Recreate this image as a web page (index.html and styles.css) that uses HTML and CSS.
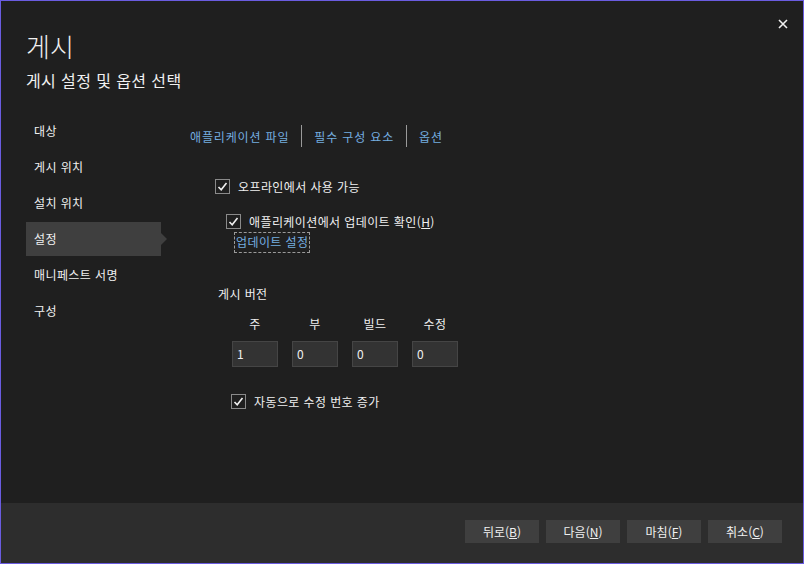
FILE: index.html
```html
<!DOCTYPE html>
<html lang="ko">
<head>
  <meta charset="UTF-8">
  <title>게시</title>
  <link rel="stylesheet" href="styles.css">
</head>
<body>

<div class="dialog">
  <div class="close-btn">
    <svg width="10" height="10" viewBox="0 0 10 10"><path d="M1 1 L9 9 M9 1 L1 9" stroke="#f0f0f0" stroke-width="1.6"/></svg>
  </div>

  <div class="main">
    <h1 class="title">게시</h1>
    <div class="subtitle">게시 설정 및 옵션 선택</div>

    <div class="body">
      <ul class="nav">
        <li>대상</li>
        <li>게시 위치</li>
        <li>설치 위치</li>
        <li class="active">설정</li>
        <li>매니페스트 서명</li>
        <li>구성</li>
      </ul>

      <div class="content">
        <div class="tabs">
          <span class="tab">애플리케이션 파일</span>
          <span class="sep"></span>
          <span class="tab">필수 구성 요소</span>
          <span class="sep"></span>
          <span class="tab">옵션</span>
        </div>

        <label class="check check-offline">
          <span class="box"><svg width="11" height="11" viewBox="0 0 11 11"><path d="M1.5 6 L4.2 8.8 L9.5 2" fill="none" stroke="#f0f0f0" stroke-width="1.6"/></svg></span>오프라인에서 사용 가능
        </label>
        <label class="check check-update">
          <span class="box"><svg width="11" height="11" viewBox="0 0 11 11"><path d="M1.5 6 L4.2 8.8 L9.5 2" fill="none" stroke="#f0f0f0" stroke-width="1.6"/></svg></span>애플리케이션에서 업데이트 확인(<u>H</u>)
        </label>
        <span class="link">업데이트 설정</span>

        <div class="version-title">게시 버전</div>
        <div class="version">
          <div class="field"><span>주</span><div class="input">1</div></div>
          <div class="field"><span>부</span><div class="input">0</div></div>
          <div class="field"><span>빌드</span><div class="input">0</div></div>
          <div class="field"><span>수정</span><div class="input">0</div></div>
        </div>

        <label class="check check-auto">
          <span class="box"><svg width="11" height="11" viewBox="0 0 11 11"><path d="M1.5 6 L4.2 8.8 L9.5 2" fill="none" stroke="#f0f0f0" stroke-width="1.6"/></svg></span>자동으로 수정 번호 증가
        </label>
      </div>
    </div>
  </div>

  <div class="footer">
    <button>뒤로(<u>B</u>)</button>
    <button>다음(<u>N</u>)</button>
    <button>마침(<u>F</u>)</button>
    <button>취소(<u>C</u>)</button>
  </div>
</div>

</body>
</html>
```

FILE: styles.css
```css
html, body {
  margin: 0;
  padding: 0;
  background: #1f1f1f;
}

body {
  font-family: "Noto Sans CJK KR", "Noto Sans", sans-serif;
  font-size: 12px;
  letter-spacing: 0.4px;
  color: #f0f0f0;
}

.dialog {
  position: relative;
  width: 802px;
  height: 562px;
  border: 1px solid #6a5ce0;
  background: #1f1f1f;
  display: flex;
  flex-direction: column;
}

.close-btn {
  position: absolute;
  top: 14px;
  right: 15px;
  width: 10px;
  height: 10px;
}

.main {
  flex: 1;
  padding: 27px 0 0 25px;
}

.title {
  margin: 0;
  font-size: 26px;
  font-weight: 300;
  line-height: 36px;
  letter-spacing: 0;
  color: #f0f0f0;
}

.subtitle {
  margin-top: 5px;
  font-size: 16px;
  line-height: 22px;
}

.body {
  display: flex;
  margin-top: 23px;
}

.nav {
  list-style: none;
  margin: 0;
  padding: 0;
  width: 135px;
}

.nav li {
  position: relative;
  height: 34px;
  line-height: 34px;
  margin-bottom: 2px;
  padding-left: 8px;
}

.nav li.active {
  background: #3f3f3f;
}

.nav li.active::after {
  content: "";
  position: absolute;
  right: -6px;
  top: 11px;
  border-left: 6px solid #3f3f3f;
  border-top: 6px solid transparent;
  border-bottom: 6px solid transparent;
}

.content {
  margin-left: 29px;
  position: relative;
  flex: 1;
}

.tabs {
  display: flex;
  align-items: center;
  height: 22px;
  margin-top: 11px;
}

.tab {
  color: #75aee0;
  font-size: 12px;
  letter-spacing: 0.85px;
}

.sep {
  width: 1px;
  height: 22px;
  background: #9a9a9a;
  margin: 0 12px;
}

.check {
  display: flex;
  align-items: center;
  font-size: 12px;
}

.box {
  width: 13px;
  height: 13px;
  border: 1px solid #8a8a8a;
  margin-right: 8px;
  display: flex;
  align-items: center;
  justify-content: center;
}

.check-offline {
  margin: 31px 0 0 25px;
}

.check-update {
  margin: 18px 0 0 36px;
}

.link {
  display: inline-block;
  margin: 2px 0 0 44px;
  padding: 1px 1px 2px 1px;
  border: 1px dashed #9a9a9a;
  color: #75aee0;
  line-height: 16px;
}

.version-title {
  margin: 32px 0 0 28px;
}

.version {
  display: flex;
  gap: 14px;
  margin: 14px 0 0 42px;
}

.field {
  display: flex;
  flex-direction: column;
  align-items: center;
}

.field span {
  line-height: 16px;
}

.input {
  margin-top: 9px;
  width: 40px;
  height: 24px;
  padding-left: 4px;
  line-height: 24px;
  background: #333333;
  border: 1px solid #454545;
  align-self: stretch;
}

.check-auto {
  margin: 26px 0 0 41px;
}

.footer {
  height: 60px;
  background: #2d2d2d;
  display: flex;
  justify-content: flex-end;
  align-items: flex-start;
  gap: 7px;
  padding: 17px 21px 0 0;
  box-sizing: border-box;
}

.footer button {
  width: 74px;
  height: 23px;
  background: #3f3f3f;
  border: none;
  color: #f0f0f0;
  font-family: "Noto Sans CJK KR", "Noto Sans", sans-serif;
  font-size: 12px;
  padding: 0;
}
```
